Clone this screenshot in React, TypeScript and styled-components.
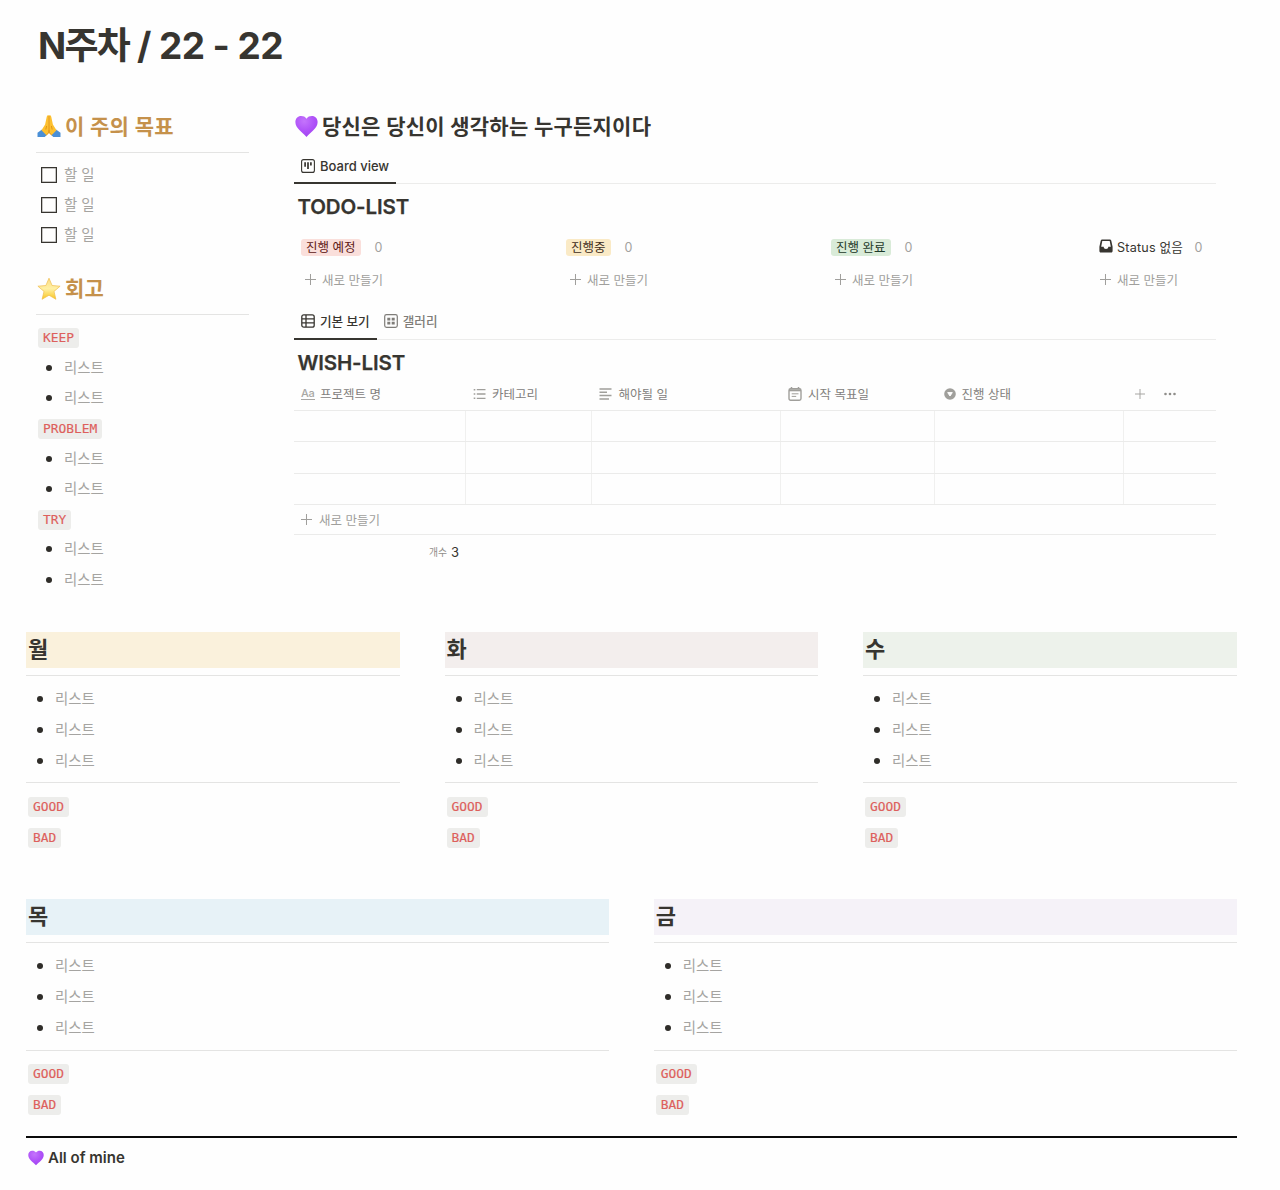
import React from "react";
import styled, { createGlobalStyle } from "styled-components";

const Global = createGlobalStyle`
  *, *::before, *::after { box-sizing: border-box; }
  body {
    margin: 0;
    background: #fefefe;
    color: #373530;
    font-family: Inter, "Noto Sans CJK KR", sans-serif;
  }
  svg { display: block; flex: none; }
`;

const Page = styled.main`
  width: 1280px;
  height: 1190px;
  padding: 20px 43px 0 26px;
  overflow: hidden;
`;

const Title = styled.h1`
  margin: 0 0 0 12px;
  height: 52px;
  line-height: 52px;
  font-size: 37px;
  font-weight: 700;
  letter-spacing: -0.6px;
  white-space: nowrap;
`;

const Week = styled.span`
  letter-spacing: -1.8px;
`;

const Top = styled.section`
  display: grid;
  grid-template-columns: 213px 922px;
  column-gap: 45px;
  margin: 36px 0 0 10px;
  height: 524px;
`;

const Column = styled.div`
  display: flex;
  flex-direction: column;
  min-width: 0;
`;

const Heading = styled.h2<{ $color?: string; $mt?: number }>`
  display: flex;
  align-items: center;
  gap: 4px;
  height: 36px;
  margin: ${(p) => p.$mt ?? 0}px 0 0 1px;
  font-size: 21px;
  line-height: 36px;
  font-weight: 600;
  letter-spacing: 0.22px;
  white-space: nowrap;
  color: ${(p) => p.$color ?? "#373530"};
`;

const HeadingText = styled.span`
  padding-top: 1px;
`;

const Rule = styled.hr<{ $mt: number; $mb: number }>`
  width: 100%;
  height: 1px;
  flex: none;
  border: 0;
  margin: ${(p) => p.$mt}px 0 ${(p) => p.$mb}px;
  background: #e4e4e3;
`;

const Row = styled.div<{ $h: number; $pad?: number; $gap: number }>`
  display: flex;
  align-items: center;
  height: ${(p) => p.$h}px;
  padding-left: ${(p) => p.$pad ?? 0}px;
  gap: ${(p) => p.$gap}px;
`;

const Muted = styled.span`
  font-size: 14.4px;
  line-height: 20px;
  color: #a5a4a1;
  white-space: nowrap;
`;

const Box = styled.span`
  width: 16px;
  height: 16px;
  border: 1.5px solid #373530;
  box-shadow: inset 0 0 0 0.5px #8b8a86;
`;

const Dot = styled.span`
  width: 6px;
  height: 6px;
  border-radius: 50%;
  background: #2f2d29;
`;

const CodeRow = styled.div<{ $h: number }>`
  display: flex;
  align-items: center;
  height: ${(p) => p.$h}px;
  padding-left: 2px;
`;

const Code = styled.code`
  height: 20px;
  padding: 0 5px;
  border-radius: 3px;
  background: #ededeb;
  color: #dd5f5c;
  font: 12.9px/20px "DejaVu Sans Mono", monospace;
  -webkit-text-stroke: 0.15px #dd5f5c;
`;

const Group = styled.div`
  margin-bottom: 1px;
`;

const Tabs = styled.nav<{ $h: number; $mt?: number }>`
  display: flex;
  height: ${(p) => p.$h}px;
  margin-top: ${(p) => p.$mt ?? 0}px;
  box-shadow: inset 0 -1px 0 #ececeb;
`;

const Tab = styled.span<{ $active?: boolean }>`
  display: flex;
  align-items: center;
  gap: 5px;
  padding: 0 7px 4px;
  border-bottom: 2px solid ${(p) => (p.$active ? "#373530" : "transparent")};
  color: ${(p) => (p.$active ? "#373530" : "#7f7d79")};
  font-size: 12.6px;
  font-weight: 500;
  white-space: nowrap;
`;

const Latin = styled.span`
  font-size: 13px;
`;

const DbTitle = styled.h3<{ $h: number }>`
  margin: 0 0 0 3.5px;
  height: ${(p) => p.$h}px;
  line-height: ${(p) => p.$h}px;
  font-size: 20.5px;
  font-weight: 600;
  letter-spacing: -0.15px;
  -webkit-text-stroke: 0.25px #373530;
`;

const Board = styled.div`
  display: grid;
  grid-template-columns: 265px 265px 265px 120px;
  margin: 7px 0 0 7px;
  height: 70px;
`;

const Tag = styled.span<{ $bg: string; $fg: string }>`
  height: 17px;
  padding: 0 5.5px 0 5px;
  border-radius: 3px;
  background: ${(p) => p.$bg};
  color: ${(p) => p.$fg};
  font-size: 12.5px;
  line-height: 17px;
  white-space: nowrap;
`;

const Status = styled.span`
  display: flex;
  align-items: center;
  gap: 4.5px;
  padding: 0 0 2px 2.5px;
  font-size: 12.6px;
  letter-spacing: 0.2px;
  white-space: nowrap;
`;

const Count = styled.span`
  font-size: 12.5px;
  color: #a3a29f;
`;

const NewItem = styled.div<{ $h: number; $pad: number; $gap: number }>`
  display: flex;
  align-items: center;
  gap: ${(p) => p.$gap}px;
  height: ${(p) => p.$h}px;
  padding-left: ${(p) => p.$pad}px;
  color: #a09f9c;
  font-size: 12.5px;
  white-space: nowrap;
`;

const TableRow = styled.div<{ $h: number }>`
  display: grid;
  grid-template-columns: 172px 126px 189px 154px 189px 92px;
  height: ${(p) => p.$h}px;
  border-bottom: 1px solid #ebebea;
`;

const Cell = styled.div`
  border-right: 1px solid #f0f0ef;
  &:last-child { border-right: 0; }
`;

const HeadCell = styled.div<{ $pad?: number; $gap?: number }>`
  display: flex;
  align-items: center;
  gap: ${(p) => p.$gap ?? 6}px;
  height: 22px;
  margin-top: -2px;
  padding-left: ${(p) => p.$pad ?? 7}px;
  padding-bottom: 3px;
  color: #82807c;
  font-size: 12.5px;
  white-space: nowrap;
`;

const AddRow = styled.div`
  border-bottom: 1px solid #ebebea;
`;

const Total = styled.div`
  display: flex;
  align-items: center;
  justify-content: flex-end;
  gap: 4px;
  width: 165px;
  height: 33px;
  font-size: 13px;
`;

const TotalLabel = styled.span`
  font-size: 9.8px;
  color: #8f8d89;
`;

const Days = styled.section<{ $cols: number; $h: number }>`
  display: grid;
  grid-template-columns: repeat(${(p) => p.$cols}, 1fr);
  column-gap: 44.6px;
  height: ${(p) => p.$h}px;
`;

const Band = styled.h2<{ $bg: string }>`
  margin: 0;
  height: 35.5px;
  padding-left: 2px;
  background: ${(p) => p.$bg};
  font-size: 22px;
  line-height: 35px;
  font-weight: 600;
`;

const Footer = styled.footer`
  display: flex;
  align-items: center;
  gap: 4px;
  height: 42px;
  padding-left: 2px;
  border-top: 2px solid #0b0b0b;
  font-size: 15px;
  font-weight: 600;
`;

const Heart = ({ size, id }: { size: number; id: string }) => (
  <svg width={size} height={size} viewBox="0 0 24 24">
    <defs>
      <radialGradient id={id} cx="0.4" cy="0.25" r="0.8">
        <stop offset="0" stopColor="#c474fc" />
        <stop offset="0.6" stopColor="#ae50f8" />
        <stop offset="1" stopColor="#a045ee" />
      </radialGradient>
    </defs>
    <path fill={`url(#${id})`} d="M12 3.800C10.700 1.800 8.700 1 6.400 1 2.900 1 .4 3.600.4 7.400c0 6.600 6.700 10 11.600 15.600C16.900 17.400 23.600 14 23.600 7.400 23.600 3.600 21.100 1 17.600 1 15.300 1 13.300 1.800 12 3.800z" />
  </svg>
);

const Hands = () => (
  <svg width="24" height="24" viewBox="0 0 24 24">
    <path fill="#4a8fd6" d="M.5 18.700l4.500-3.200 5.300 5-2.600 2.500H.5zM23.500 18.700l-4.500-3.200-5.300 5 2.600 2.500h7.200z" />
    <path fill="#fdc02f" d="M11.900 1.300c-1.200-.4-1.900.3-2.200 1.700L8.100 10.500 4.500 16.300l4.900 4.900c1.500-1 2.600-2.500 2.600-4.500zM12.100 1.300c1.200-.4 1.900.3 2.200 1.700l1.600 7.500 3.600 5.800-4.900 4.900c-1.500-1-2.600-2.500-2.600-4.500z" />
    <path fill="none" stroke="#d98a12" strokeWidth=".8" d="M12 2v15M9.300 21c1.700-1 2.700-2.400 2.700-4.300 0 1.900 1 3.300 2.700 4.300M9.600 12l-.8 3.500M14.400 12l.8 3.500" />
  </svg>
);

const Star = () => (
  <svg width="24" height="24" viewBox="0 0 24 24">
    <defs>
      <linearGradient id="star" x1="0" y1="0" x2="0" y2="1">
        <stop offset="0" stopColor="#fbdc86" />
        <stop offset="0.5" stopColor="#fff0a4" />
        <stop offset="1" stopColor="#f8c51f" />
      </linearGradient>
    </defs>
    <path fill="url(#star)" stroke="#efbd4e" strokeWidth=".7" strokeLinejoin="round" d="M12 1.200l3.100 7.300 8 .7-6.100 5.200 1.900 7.900L12 18.200l-6.900 4.100L7 14.400.9 9.200l8-.7z" />
  </svg>
);

const BoardIcon = () => (
  <svg width="14" height="14" viewBox="0 0 14 14" fill="none" stroke="currentColor">
    <rect x=".6" y=".6" width="12.800" height="12.800" rx="2" strokeWidth="1.100" />
    <path strokeWidth="1.700" d="M4.100 3.200v4.600M7 3.200v6.800M9.900 3.200v3.400" />
  </svg>
);

const TableIcon = () => (
  <svg width="14" height="14" viewBox="0 0 14 14" fill="none" stroke="currentColor" strokeWidth="1.300">
    <rect x=".8" y=".8" width="12.400" height="12.400" rx="2" />
    <path d="M1 4.800h12M1 8.900h12M5 1v12" />
  </svg>
);

const GalleryIcon = () => (
  <svg width="14" height="14" viewBox="0 0 14 14">
    <rect x=".7" y=".7" width="12.600" height="12.600" rx="1.800" fill="none" stroke="currentColor" strokeWidth="1.200" />
    <path fill="currentColor" d="M3.300 3.800h3v2.700h-3zM7.700 3.800h3v2.700h-3zM3.300 7.700h3v2.700h-3zM7.700 7.700h3v2.700h-3z" />
  </svg>
);

const InboxIcon = () => (
  <svg width="14" height="14" viewBox="0 0 14 14">
    <path fill="#373530" fillRule="evenodd" d="M3.200.5h7.600c.8 0 1.300.4 1.500 1.200l1.300 6V12c0 .9-.5 1.500-1.400 1.500H1.800C.9 13.500.4 12.900.4 12V7.700l1.300-6C1.900.9 2.400.5 3.200.5zM3.300 2 2.200 7.700h2.500c0 1.300 1 2.300 2.300 2.300s2.300-1 2.300-2.300h2.500L10.700 2z" />
  </svg>
);

const Plus = ({ size = 11 }: { size?: number }) => (
  <svg width={size} height={size} viewBox="0 0 12 12" fill="none" stroke="currentColor" strokeWidth="1.100">
    <path d="M6 0v12M0 6h12" />
  </svg>
);

const NameIcon = styled.span`
  width: 14px;
  height: 12px;
  border-bottom: 1px solid #a8a7a4;
  color: #a8a7a4;
  font-size: 11px;
  font-weight: 500;
  line-height: 11px;
  letter-spacing: -0.3px;
`;

const ListIcon = () => (
  <svg width="13" height="12" viewBox="0 0 13 12" fill="none" stroke="#a09f9b" strokeWidth="1.300">
    <path d="M3.800 1.700H12.500M3.800 6H12.500M3.800 10.300H12.500" />
    <path strokeWidth="1.600" d="M.7 1.700h1.600M.7 6h1.600M.7 10.300h1.600" />
  </svg>
);

const TextIcon = () => (
  <svg width="13" height="12" viewBox="0 0 13 12" fill="none" stroke="#a09f9b" strokeWidth="1.500">
    <path d="M.5 1h12M.5 4.300h7.500M.5 7.600h12M.5 10.900h9.500" />
  </svg>
);

const DateIcon = () => (
  <svg width="14" height="14" viewBox="0 0 14 14" fill="none" stroke="#a09f9b">
    <rect x="1" y="1.800" width="12" height="11.400" rx="1.600" strokeWidth="1.400" />
    <path strokeWidth="2" d="M1 3.300h12" />
    <path strokeWidth="1.500" d="M3.500 0v2M10.500 0v2" />
    <path strokeWidth="1" d="M3.700 6.800h6.800M3.700 9.400h4.500" />
  </svg>
);

const SelectIcon = () => (
  <svg width="12" height="12" viewBox="0 0 12 12">
    <circle cx="6" cy="6" r="5.800" fill="#a09f9b" />
    <path fill="#fefefe" stroke="#fefefe" strokeLinejoin="round" d="M3.700 4.600h4.600L6 8z" />
  </svg>
);

const More = () => (
  <svg width="12" height="4" viewBox="0 0 12 4" fill="#8f8e8a">
    <circle cx="1.500" cy="2" r="1.300" />
    <circle cx="6" cy="2" r="1.300" />
    <circle cx="10.500" cy="2" r="1.300" />
  </svg>
);

const HeadTools = styled.div`
  display: flex;
  align-items: center;
  gap: 19px;
  height: 22px;
  margin-top: -2px;
  padding: 0 0 3px 11px;
  color: #a09f9b;
`;

const Bullet = ({ h, pad, gap }: { h: number; pad: number; gap: number }) => (
  <Row $h={h} $pad={pad} $gap={gap}>
    <Dot />
    <Muted>리스트</Muted>
  </Row>
);

const Day = ({ name, bg }: { name: string; bg: string }) => (
  <Column>
    <Band $bg={bg}>{name}</Band>
    <Rule $mt={7.500} $mb={7} />
    {[0, 1, 2].map((i) => (
      <Bullet key={i} h={31} pad={11} gap={12} />
    ))}
    <Rule $mt={6.300} $mb={8.200} />
    <CodeRow $h={31}><Code>GOOD</Code></CodeRow>
    <CodeRow $h={31}><Code>BAD</Code></CodeRow>
  </Column>
);

const New = ({ h, pad, gap = 6 }: { h: number; pad: number; gap?: number }) => (
  <NewItem $h={h} $pad={pad} $gap={gap}>
    <Plus />
    <span>새로 만들기</span>
  </NewItem>
);

const TAGS = [
  { name: "진행 예정", bg: "#fadfdb", fg: "#5d1715" },
  { name: "진행중", bg: "#faeac6", fg: "#402c1b" },
  { name: "진행 완료", bg: "#d9ebd8", fg: "#1c3829" },
];

export default function App() {
  return (
    <Page>
      <Global />
      <Title><Week>N주차</Week> / 22 - 22</Title>
      <Top>
        <Column>
          <Heading $color="#c5914b"><Hands /><HeadingText>이 주의 목표</HeadingText></Heading>
          <Rule $mt={8} $mb={6.500} />
          {[0, 1, 2].map((i) => (
            <Row key={i} $h={30.300} $pad={5} $gap={7}>
              <Box />
              <Muted>할 일</Muted>
            </Row>
          ))}
          <Heading $color="#c5914b" $mt={20.500}><Star /><HeadingText>회고</HeadingText></Heading>
          <Rule $mt={7.500} $mb={8} />
          {["KEEP", "PROBLEM", "TRY"].map((label) => (
            <Group key={label}>
              <CodeRow $h={29.200}><Code>{label}</Code></CodeRow>
              <Bullet h={30.300} pad={10} gap={12} />
              <Bullet h={30.300} pad={10} gap={12} />
            </Group>
          ))}
        </Column>
        <Column>
          <Heading><Heart size={23} id="heart-lg" /><HeadingText>당신은 당신이 생각하는 누구든지이다</HeadingText></Heading>
          <Tabs $h={30} $mt={10}>
            <Tab $active><BoardIcon /><Latin>Board view</Latin></Tab>
          </Tabs>
          <DbTitle $h={46}>TODO-LIST</DbTitle>
          <Board>
            {TAGS.map((t) => (
              <div key={t.name}>
                <Row $h={20} $gap={13.500}>
                  <Tag $bg={t.bg} $fg={t.fg}>{t.name}</Tag>
                  <Count>0</Count>
                </Row>
                <New h={45} pad={4} />
              </div>
            ))}
            <div>
              <Row $h={20} $gap={11.500}>
                <Status><InboxIcon />Status 없음</Status>
                <Count>0</Count>
              </Row>
              <New h={45} pad={4} />
            </div>
          </Board>
          <Tabs $h={33}>
            <Tab $active><TableIcon />기본 보기</Tab>
            <Tab><GalleryIcon />갤러리</Tab>
          </Tabs>
          <DbTitle $h={46}>WISH-LIST</DbTitle>
          <TableRow $h={25}>
            <HeadCell $gap={5}><NameIcon>Aa</NameIcon>프로젝트 명</HeadCell>
            <HeadCell><ListIcon />카테고리</HeadCell>
            <HeadCell $gap={6.500}><TextIcon />해야될 일</HeadCell>
            <HeadCell><DateIcon />시작 목표일</HeadCell>
            <HeadCell $pad={8.500}><SelectIcon />진행 상태</HeadCell>
            <HeadTools><Plus size={10} /><More /></HeadTools>
          </TableRow>
          {[0, 1, 2].map((r) => (
            <TableRow key={r} $h={31.300}>
              {[0, 1, 2, 3, 4, 5].map((c) => <Cell key={c} />)}
            </TableRow>
          ))}
          <AddRow><New h={29.500} pad={7} gap={7} /></AddRow>
          <Total><TotalLabel>개수</TotalLabel>3</Total>
        </Column>
      </Top>
      <Days $cols={3} $h={267.300}>
        <Day name="월" bg="#faf1dc" />
        <Day name="화" bg="#f3eeed" />
        <Day name="수" bg="#edf2eb" />
      </Days>
      <Days $cols={2} $h={236.700}>
        <Day name="목" bg="#e7f2f7" />
        <Day name="금" bg="#f5f2f8" />
      </Days>
      <Footer><Heart size={16} id="heart-sm" />All of mine</Footer>
    </Page>
  );
}
